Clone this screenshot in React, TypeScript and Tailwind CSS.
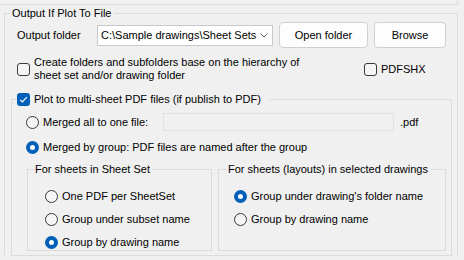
import React from 'react';

function CheckBox({ checked = false }: { checked?: boolean }) {
  if (checked) {
    return (
      <span className="flex size-[13px] shrink-0 items-center justify-center rounded-[3px] bg-[#005fb8]">
        <svg viewBox="0 0 13 13" className="size-[13px]">
          <path d="M3.2 6.8 L5.4 9 L9.8 4.2" fill="none" stroke="#ffffff" strokeWidth="1.2" />
        </svg>
      </span>
    );
  }
  return <span className="block size-[13px] shrink-0 rounded-[3px] border border-[#3a3a3a] bg-[#f5f5f5]" />;
}

function Radio({ checked = false }: { checked?: boolean }) {
  if (checked) {
    return (
      <span className="flex size-[13px] shrink-0 items-center justify-center rounded-full bg-[#005fb8]">
        <span className="block size-[5px] rounded-full bg-white" />
      </span>
    );
  }
  return <span className="block size-[13px] shrink-0 rounded-full border border-[#3a3a3a] bg-[#f5f5f5]" />;
}

function RadioRow({ label, checked = false }: { label: string; checked?: boolean }) {
  return (
    <div className="flex h-[14px] items-center gap-[4px]">
      <Radio checked={checked} />
      <span className="whitespace-nowrap">{label}</span>
    </div>
  );
}

export default function App() {
  return (
    <main className="w-[464px] h-[260px] overflow-hidden bg-[#f0f0f0] text-[11px] leading-[13px] text-black font-['Liberation_Sans',Arial,sans-serif]">
      {/* bottom of the box above */}
      <div className="h-[5px] w-[458px] border-b border-r border-[#dcdcdc]" />

      {/* Output If Plot To File */}
      <fieldset className="ml-[4px] w-[454px] h-[250px] border border-b-0 border-[#dcdcdc]">
        <legend className="ml-[6px] px-[1px] pr-[3px] leading-[16px]">Output If Plot To File</legend>

        <div className="flex flex-col pl-[6px] pr-[5px]">
          {/* Output folder row */}
          <div className="mt-[1px] flex h-[26px] items-center pl-[6px]">
            <span className="w-[80px] whitespace-nowrap">Output folder</span>
            <div className="flex h-[21px] w-[176px] items-center justify-between border border-[#c8c8c8] bg-white pl-[3px] pr-[4px]">
              <span className="whitespace-nowrap">C:\Sample drawings\Sheet Sets</span>
              <svg viewBox="0 0 8 5" className="h-[5px] w-[8px]">
                <path d="M0.5 0.5 L4 4 L7.5 0.5" fill="none" stroke="#606060" strokeWidth="1" />
              </svg>
            </div>
            <button type="button" className="ml-[6px] h-[26px] w-[89px] rounded-[4px] border border-[#d0d0d0] bg-[#fdfdfd]">Open folder</button>
            <button type="button" className="ml-[6px] h-[26px] w-[72px] rounded-[4px] border border-[#d0d0d0] bg-[#fdfdfd]">Browse</button>
          </div>

          {/* Create folders row */}
          <div className="mt-[8px] flex h-[26px] items-center pl-[6px]">
            <CheckBox />
            <span className="ml-[4px] w-[330px]">
              Create folders and subfolders base on the hierarchy of
              <br />
              sheet set and/or drawing folder
            </span>
            <div className="flex items-center gap-[4px]">
              <CheckBox />
              <span>PDFSHX</span>
            </div>
          </div>

          {/* Plot to multi-sheet PDF */}
          <fieldset className="mt-[9px] -mb-px w-[441px] border border-[#dcdcdc]">
            <legend className="ml-[5px] pr-[8px] leading-[16px]">
              <span className="flex items-center gap-[4px]">
                <CheckBox checked />
                <span>Plot to multi-sheet PDF files (if publish to PDF)</span>
              </span>
            </legend>

            <div className="flex flex-col pl-[14px] pr-[5px] pb-[4px]">
              <div className="mt-[6px] flex h-[18px] items-center">
                <div className="flex w-[137px] items-center gap-[4px]">
                  <Radio />
                  <span className="whitespace-nowrap">Merged all to one file:</span>
                </div>
                <div className="h-[18px] w-[231px] border border-[#e2e2e2] bg-[#f0f0f0]" />
                <span className="ml-[6px]">.pdf</span>
              </div>

              <div className="mt-[8px] flex h-[16px] items-center gap-[4px]">
                <Radio checked />
                <span className="whitespace-nowrap">Merged by group: PDF files are named after the group</span>
              </div>

              <div className="ml-[1px] mt-[6px] flex gap-[6px]">
                <fieldset className="w-[185px] border border-[#dcdcdc]">
                  <legend className="ml-[6px] px-[1px] pr-[3px] leading-[16px]">For sheets in Sheet Set</legend>
                  <div className="flex flex-col gap-[9px] pl-[17px] pt-[12px] pb-[1px]">
                    <RadioRow label="One PDF per SheetSet" />
                    <RadioRow label="Group under subset name" />
                    <RadioRow label="Group by drawing name" checked />
                  </div>
                </fieldset>
                <fieldset className="w-[228px] border border-[#dcdcdc]">
                  <legend className="ml-[8px] px-[1px] pr-[3px] leading-[16px]">For sheets (layouts) in selected drawings</legend>
                  <div className="flex flex-col gap-[9px] pl-[15px] pt-[12px] pb-[1px]">
                    <RadioRow label="Group under drawing's folder name" checked />
                    <RadioRow label="Group by drawing name" />
                  </div>
                </fieldset>
              </div>
            </div>
          </fieldset>
        </div>
      </fieldset>
    </main>
  );
}
